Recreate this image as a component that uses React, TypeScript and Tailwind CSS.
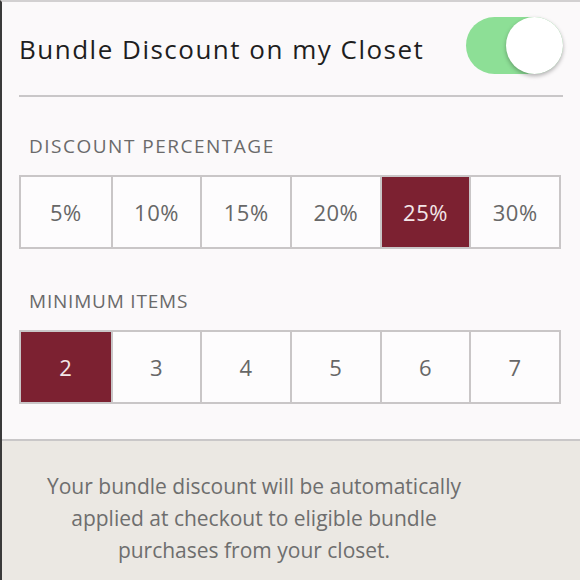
import React from "react";

const pct = ["5%", "10%", "15%", "20%", "25%", "30%"];
const items = ["2", "3", "4", "5", "6", "7"];

function Row({ values, selected }: { values: string[]; selected: string }) {
  return (
    <div className="mx-[19px] grid grid-cols-6 h-[74px] border-2 border-[#c9c6c7] bg-white">
      {values.map((v, i) => (
        <div
          key={v}
          className={
            (i > 0 ? "border-l-2 border-[#c9c6c7] " : "") +
            (v === selected ? "bg-[#7c2131] text-[#f3e6e8] " : "bg-[#fdfcfd] text-[#676767] ") +
            "flex items-center justify-center text-[22px] tracking-[0.5px]"
          }
        >
          {v}
        </div>
      ))}
    </div>
  );
}

export default function App() {
  return (
    <div
      className="w-[580px] h-[580px] bg-[#fbf9fa] border-l-2 border-l-[#3a3a3a] border-t-2 border-t-[#d2d0d1] flex flex-col overflow-hidden"
      style={{ fontFamily: "'Open Sans', Lato, sans-serif" }}
    >
      <div className="h-[93px] pl-[17px] pr-[17px] flex items-center justify-between">
        <span className="text-[26px] tracking-[1.5px] text-[#1e1e1e] mt-[2px]">Bundle Discount on my Closet</span>
        <div className="relative w-[97px] h-[57px] rounded-full bg-[#8ddf96] mt-[-6px]">
          <div className="absolute right-0 top-0 w-[57px] h-[57px] rounded-full bg-white shadow-[0_2px_4px_rgba(0,0,0,0.3)]" />
        </div>
      </div>
      <div className="mx-[17px] h-[2px] bg-[#c9c7c8]" />
      <div className="pl-[27px] mt-[38px] h-[22px] flex items-center text-[19px] tracking-[1.5px] text-[#6a6a6a]">
        DISCOUNT PERCENTAGE
      </div>
      <div className="mt-[18px] ml-[-2px]">
        <Row values={pct} selected="25%" />
      </div>
      <div className="pl-[27px] mt-[41px] h-[22px] flex items-center text-[19px] tracking-[0.8px] text-[#6a6a6a]">
        MINIMUM ITEMS
      </div>
      <div className="mt-[18px] ml-[-2px]">
        <Row values={items} selected="2" />
      </div>
      <div className="mt-[35px] flex-1 border-t-2 border-[#c9c7c8] bg-[#ebe8e3] flex justify-center pt-[29px] pr-[74px]">
        <p className="w-[440px] text-center text-[21px] leading-[32px] text-[#6e6e6e]">
          Your bundle discount will be automatically applied at checkout to eligible bundle purchases from your closet.
        </p>
      </div>
    </div>
  );
}
